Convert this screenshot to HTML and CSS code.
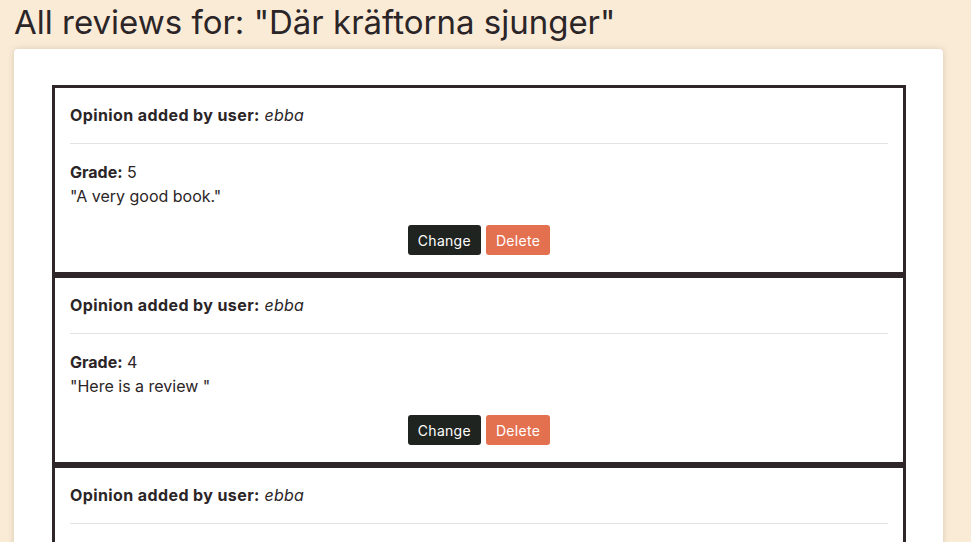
FILE: index.html
```html
<!DOCTYPE html>
<html lang="sv">
<head>
<meta charset="utf-8">
<title>All reviews</title>
<link rel="stylesheet" href="styles.css">
</head>
<body>
<h1 class="page-title">All reviews for: "Där kräftorna sjunger"</h1>
<div class="card">
  <div class="review">
    <p class="review-user"><strong>Opinion added by user:</strong> <em>ebba</em></p>
    <hr class="divider">
    <p class="review-line"><strong>Grade:</strong> 5</p>
    <p class="review-line">"A very good book."</p>
    <div class="actions">
      <button class="btn btn-change">Change</button>
      <button class="btn btn-delete">Delete</button>
    </div>
  </div>
  <div class="review">
    <p class="review-user"><strong>Opinion added by user:</strong> <em>ebba</em></p>
    <hr class="divider">
    <p class="review-line"><strong>Grade:</strong> 4</p>
    <p class="review-line">"Here is a review "</p>
    <div class="actions">
      <button class="btn btn-change">Change</button>
      <button class="btn btn-delete">Delete</button>
    </div>
  </div>
  <div class="review">
    <p class="review-user"><strong>Opinion added by user:</strong> <em>ebba</em></p>
    <hr class="divider">
  </div>
</div>
</body>
</html>
```

FILE: styles.css
```css
html, body {
  margin: 0;
  padding: 0;
  background: #faebd7;
  color: #2b2527;
  font-family: "Inter", "Noto Sans", sans-serif;
  overflow: hidden;
}

.page-title {
  margin: 0 0 0 14px;
  font-size: 33px;
  font-weight: 400;
  line-height: 44px;
  height: 49px;
  color: #2b2527;
}

.card {
  margin-left: 14px;
  width: 929px;
  box-sizing: border-box;
  background: #fff;
  border-radius: 4px;
  box-shadow: 0 0 6px rgba(120, 100, 80, 0.25);
  padding: 36px 37px 40px 38px;
}

.review {
  border: 3px solid #2e2628;
  padding: 15px 15px 17px;
}

.review-user {
  margin: 0;
  font-size: 16px;
  line-height: 24px;
  letter-spacing: 0.2px;
}

.review-user strong {
  letter-spacing: 0.4px;
}

.review-user em {
  font-style: italic;
}

.divider {
  margin: 16px 0;
  border: 0;
  border-top: 1px solid #e3e3e3;
  height: 0;
}

.review-line {
  margin: 0;
  font-size: 16px;
  line-height: 24px;
}

.actions {
  display: flex;
  justify-content: center;
  gap: 5px;
  margin-top: 17px;
}

.btn {
  font-family: inherit;
  font-size: 14px;
  letter-spacing: 0.3px;
  height: 30px;
  padding: 0 10px;
  border: 0;
  border-radius: 3px;
  color: #fff;
}

.btn-change {
  background: #1f2420;
}

.btn-delete {
  background: #e3704f;
}
```
